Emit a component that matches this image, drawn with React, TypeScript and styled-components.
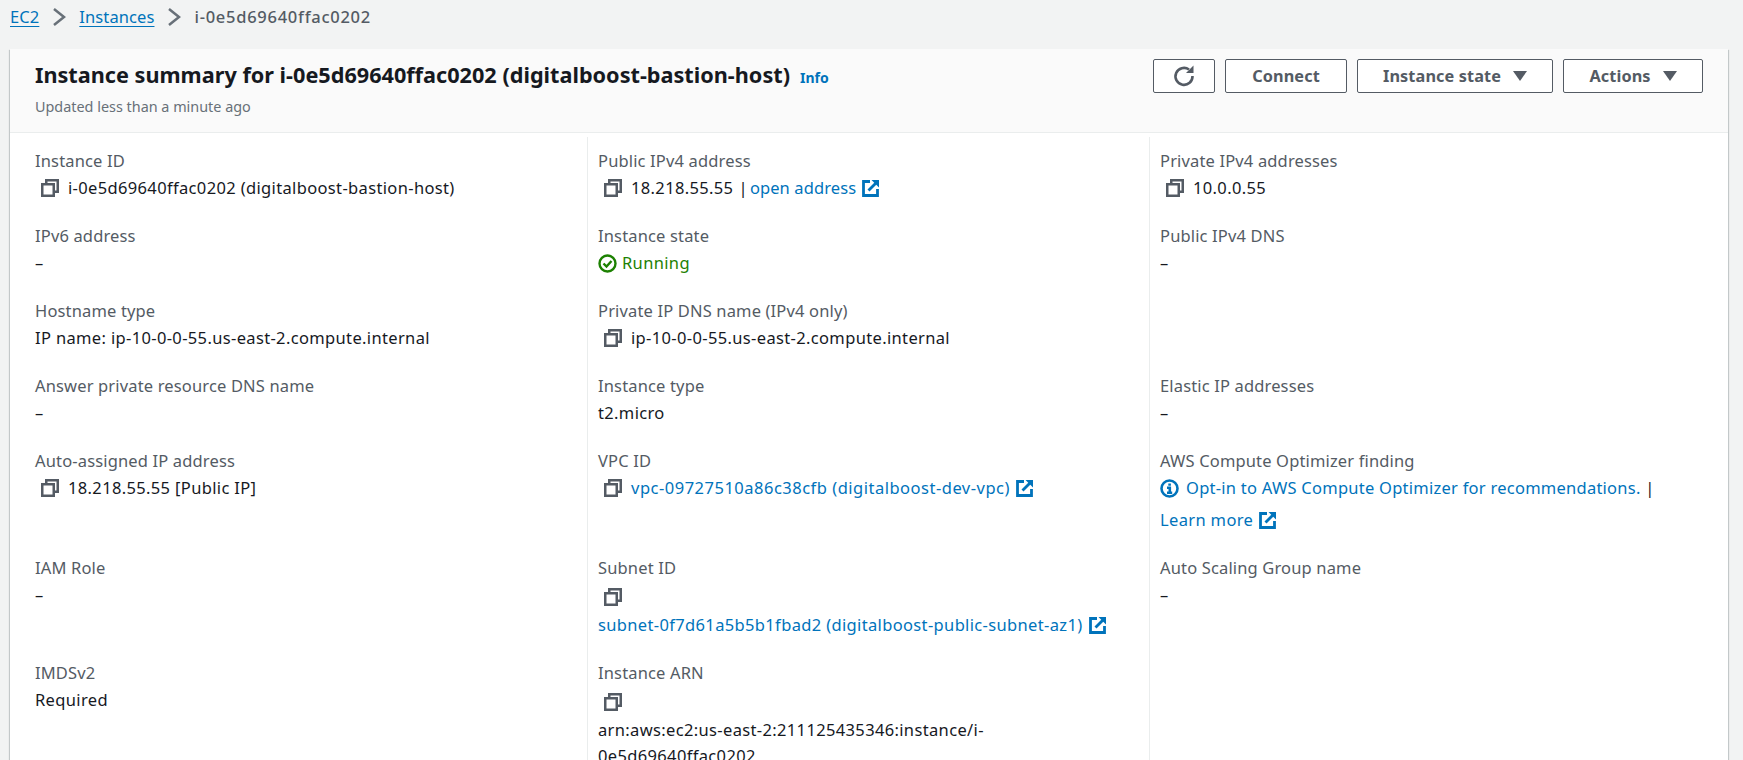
import { createGlobalStyle } from "styled-components";
import styled from "styled-components";
import { ReactNode } from "react";

const GlobalStyle = createGlobalStyle`
  html, body {
    margin: 0;
    height: 760px;
    overflow: hidden;
    background: #f2f3f3;
    color: #16191f;
    font-family: "Noto Sans", "Open Sans", sans-serif;
    font-size: 16.5px;
    letter-spacing: 0.35px;
    line-height: 22px;
  }
`;

const Page = styled.div`
  padding-left: 10px;
  width: 1718px;
`;

const Breadcrumbs = styled.nav`
  display: flex;
  align-items: center;
  height: 34px;
  margin-bottom: 15px;
  color: #545b64;
`;

const CrumbLink = styled.a`
  color: #0073bb;
  letter-spacing: 0.1px;
  text-decoration: underline;
  text-underline-offset: 3px;
`;

const CrumbCurrent = styled.span`
  font-weight: 500;
  letter-spacing: 0.73px;
`;

const Chevron = styled.svg`
  width: 18px;
  height: 18px;
  margin: 0 11px;
  fill: none;
  stroke: #687078;
  stroke-width: 2.5;
`;

const Card = styled.section`
  background: #fff;
  box-shadow: 0 1px 1px 0 rgba(0, 28, 36, 0.3), 1px 1px 1px 0 rgba(0, 28, 36, 0.15), -1px 1px 1px 0 rgba(0, 28, 36, 0.15);
`;

const Header = styled.header`
  display: flex;
  justify-content: space-between;
  height: 84px;
  box-sizing: border-box;
  padding: 10px 25px 0;
  background: #fafafa;
  border-bottom: 1px solid #eaeded;
`;

const TitleBlock = styled.div`
  padding-top: 3px;
`;

const TitleRow = styled.div`
  display: flex;
  align-items: baseline;
  gap: 10px;
`;

const Title = styled.h1`
  margin: 0;
  font-size: 21.66px;
  letter-spacing: 0;
  line-height: 26px;
  font-weight: 700;
`;

const InfoLink = styled.a`
  color: #0073bb;
  font-size: 14px;
  letter-spacing: 0;
  font-weight: 700;
`;

const Subtitle = styled.div`
  margin-top: 8px;
  font-size: 14.4px;
  letter-spacing: 0;
  line-height: 20px;
  color: #687078;
`;

const Actions = styled.div`
  display: flex;
  gap: 10px;
`;

const Button = styled.button<{ $width: number }>`
  display: flex;
  align-items: center;
  justify-content: center;
  gap: 12px;
  width: ${(p) => p.$width}px;
  height: 34px;
  padding: 0 0 1px;
  background: #fff;
  border: 1px solid #545b64;
  border-radius: 2px;
  color: #545b64;
  font: 700 16.3px "Noto Sans", sans-serif;
  letter-spacing: 0.1px;
`;

const Caret = styled.svg`
  width: 14px;
  height: 10px;
  margin-top: 1px;
  fill: #545b64;
`;

const Grid = styled.div`
  display: grid;
  grid-template-columns: 577px 562px 1fr;
  margin-top: 4px;
`;

const Cell = styled.div<{ $first?: boolean }>`
  padding: 13px 0 13px ${(p) => (p.$first ? "25px" : "10px")};
  border-left: ${(p) => (p.$first ? "none" : "1px solid #eaeded")};
`;

const Label = styled.div`
  color: #545b64;
  letter-spacing: 0.15px;
  margin-bottom: 5px;
`;

const CopyRow = styled.div`
  display: flex;
  align-items: center;
  height: 22px;
  padding-left: 6px;
`;

const CopyOnly = styled(CopyRow)`
  height: 25px;
  margin-bottom: 5px;
`;

const CopyIcon = styled.svg`
  width: 18px;
  height: 18px;
  margin-right: 9px;
  flex: none;
  fill: none;
  stroke: #545b64;
  stroke-width: 2.5;
`;

const Link = styled.a`
  color: #0073bb;
`;

const AddressLink = styled(Link)`
  letter-spacing: 0.1px;
`;

const OptInLink = styled(Link)`
  letter-spacing: 0.25px;
`;

const VpcLink = styled(Link)`
  letter-spacing: 0.5px;
`;

const Pipe = styled.span`
  margin: 0 2px 0 5px;
`;

const ExtIcon = styled.svg`
  display: inline-block;
  width: 18px;
  height: 18px;
  margin-left: 6px;
  vertical-align: -3px;
  flex: none;
  fill: none;
  stroke: #0073bb;
  stroke-width: 2.8;
`;

const Status = styled.div`
  display: flex;
  align-items: center;
  gap: 5px;
  color: #1d8102;
`;

const StatusIcon = styled.svg`
  width: 19px;
  height: 19px;
  fill: none;
  stroke: #1d8102;
  stroke-width: 2.4;
`;

const InfoIcon = styled.svg`
  width: 19px;
  height: 19px;
  margin-right: 7px;
  vertical-align: -4px;
  fill: none;
  stroke: #0073bb;
  stroke-width: 2.6;
`;

const LearnMore = styled.div`
  margin-top: 10px;
`;

const Arn = styled.div`
  line-height: 26px;
  margin-top: -2px;
  width: 500px;
`;

const Copy = () => (
  <CopyIcon viewBox="0 0 18 18">
    <rect x="1.25" y="5.25" width="11.5" height="11.5" />
    <path d="M5.25 5V1.25h11.5v11.5H13" />
  </CopyIcon>
);

const Ext = () => (
  <ExtIcon viewBox="0 0 18 18">
    <path d="M8 2.5H1.5v14h14V10" />
    <path d="M6.5 11.5 14 4" />
    <path d="M9.5 1h7.5v7.5z" fill="#0073bb" stroke="none" />
  </ExtIcon>
);

const Field = ({ label, first, children }: { label?: string; first?: boolean; children?: ReactNode }) => (
  <Cell $first={first}>
    {label && <Label>{label}</Label>}
    {children}
  </Cell>
);

export default function App() {
  return (
    <Page>
      <GlobalStyle />
      <Breadcrumbs>
        <CrumbLink>EC2</CrumbLink>
        <Chevron viewBox="0 0 18 18"><path d="M4 1l10 8-10 8" /></Chevron>
        <CrumbLink>Instances</CrumbLink>
        <Chevron viewBox="0 0 18 18"><path d="M4 1l10 8-10 8" /></Chevron>
        <CrumbCurrent>i-0e5d69640ffac0202</CrumbCurrent>
      </Breadcrumbs>
      <Card>
        <Header>
          <TitleBlock>
            <TitleRow>
              <Title>Instance summary for i-0e5d69640ffac0202 (digitalboost-bastion-host)</Title>
              <InfoLink>Info</InfoLink>
            </TitleRow>
            <Subtitle>Updated less than a minute ago</Subtitle>
          </TitleBlock>
          <Actions>
            <Button $width={62} aria-label="Refresh">
              <svg width="22" height="22" viewBox="0 0 22 22" fill="none" stroke="#545b64" strokeWidth="2.6">
                <path d="M16 4.5A8.5 8.5 0 1 0 19.5 11" />
                <path d="M13 8h7.5V.5z" fill="#545b64" stroke="none" />
              </svg>
            </Button>
            <Button $width={122}>Connect</Button>
            <Button $width={196}>
              Instance state
              <Caret viewBox="0 0 14 10"><path d="M0 0h14L7 10z" /></Caret>
            </Button>
            <Button $width={140}>
              Actions
              <Caret viewBox="0 0 14 10"><path d="M0 0h14L7 10z" /></Caret>
            </Button>
          </Actions>
        </Header>
        <Grid>
          <Field first label="Instance ID">
            <CopyRow><Copy />i-0e5d69640ffac0202 (digitalboost-bastion-host)</CopyRow>
          </Field>
          <Field label="Public IPv4 address">
            <CopyRow>
              <Copy />
              18.218.55.55<Pipe>|</Pipe><AddressLink>open address</AddressLink><Ext />
            </CopyRow>
          </Field>
          <Field label="Private IPv4 addresses">
            <CopyRow><Copy />10.0.0.55</CopyRow>
          </Field>

          <Field first label="IPv6 address">–</Field>
          <Field label="Instance state">
            <Status>
              <StatusIcon viewBox="0 0 19 19">
                <circle cx="9.5" cy="9.5" r="8" />
                <path d="M5.5 9.5l3 3 5-5.5" />
              </StatusIcon>
              Running
            </Status>
          </Field>
          <Field label="Public IPv4 DNS">–</Field>

          <Field first label="Hostname type">IP name: ip-10-0-0-55.us-east-2.compute.internal</Field>
          <Field label="Private IP DNS name (IPv4 only)">
            <CopyRow><Copy />ip-10-0-0-55.us-east-2.compute.internal</CopyRow>
          </Field>
          <Field />

          <Field first label="Answer private resource DNS name">–</Field>
          <Field label="Instance type">t2.micro</Field>
          <Field label="Elastic IP addresses">–</Field>

          <Field first label="Auto-assigned IP address">
            <CopyRow><Copy />18.218.55.55 [Public IP]</CopyRow>
          </Field>
          <Field label="VPC ID">
            <CopyRow><Copy /><VpcLink>vpc-09727510a86c38cfb (digitalboost-dev-vpc)</VpcLink><Ext /></CopyRow>
          </Field>
          <Field label="AWS Compute Optimizer finding">
            <div>
              <InfoIcon viewBox="0 0 19 19">
                <circle cx="9.5" cy="9.5" r="8" />
                <path d="M7 8.7h2.8v4.8M7 13.7h5.2M9.6 4.5v2.2" />
              </InfoIcon>
              <OptInLink>Opt-in to AWS Compute Optimizer for recommendations.</OptInLink> |
            </div>
            <LearnMore><Link>Learn more</Link><Ext /></LearnMore>
          </Field>

          <Field first label="IAM Role">–</Field>
          <Field label="Subnet ID">
            <CopyOnly><Copy /></CopyOnly>
            <Link>subnet-0f7d61a5b5b1fbad2 (digitalboost-public-subnet-az1)</Link><Ext />
          </Field>
          <Field label="Auto Scaling Group name">–</Field>

          <Field first label="IMDSv2">Required</Field>
          <Field label="Instance ARN">
            <CopyOnly><Copy /></CopyOnly>
            <Arn>arn:aws:ec2:us-east-2:211125435346:instance/i-<wbr />0e5d69640ffac0202</Arn>
          </Field>
          <Field />
        </Grid>
      </Card>
    </Page>
  );
}
